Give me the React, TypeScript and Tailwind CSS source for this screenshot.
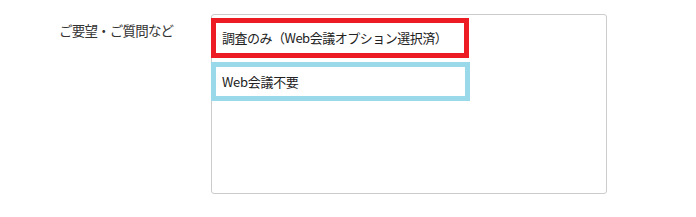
const font = { fontFamily: '"Noto Sans CJK JP", "Noto Sans", sans-serif' }

export default function App() {
  return (
    <div className="w-[696px] h-[217px] bg-white flex pt-[14px] pl-[59px] text-[#333]" style={font}>
      {/* Label */}
      <div className="w-[152px] pt-[6px] text-[13.5px] leading-[20px] tracking-[-0.8px]">ご要望・ご質問など</div>

      {/* Textarea-like box */}
      <div className="w-[396px] h-[180px] border border-[#cccccc] rounded-[3px] pt-[3px] flex flex-col gap-[4px]">
        <div className="-ml-px w-[258px] h-[40px] border-[5px] border-[#ed1c24] flex items-center pl-[6px] text-[13px] tracking-[-0.5px] text-[#222]">
          調査のみ（Web会議オプション選択済）
        </div>
        <div className="-ml-px w-[259px] h-[39px] border-[5px] border-[#99d9ea] flex items-center pl-[6px] text-[13px] tracking-[-0.3px] text-[#222]">
          Web会議不要
        </div>
      </div>
    </div>
  )
}
